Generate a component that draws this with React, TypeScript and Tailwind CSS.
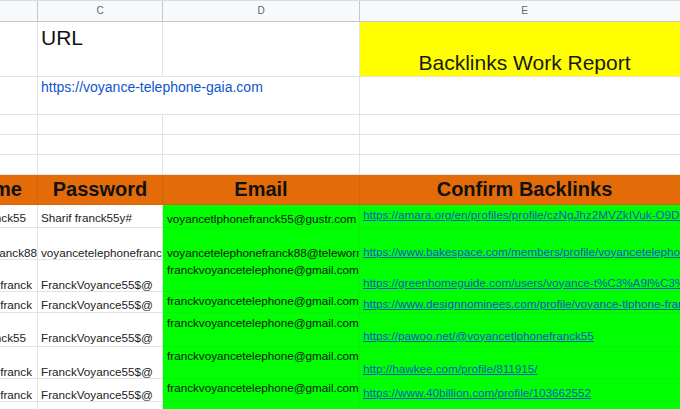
import React from "react";

type CellProps = { className?: string; children?: React.ReactNode };

// one spreadsheet cell: gridlines on the right and bottom
const Cell = ({ className = "", children }: CellProps) => (
  <div className={`flex overflow-hidden whitespace-nowrap border-r border-b ${className}`}>{children}</div>
);

const head = "bg-[#f8f9fa] border-[#c4c7c5] justify-center items-center text-[10px] text-[#5f6368]";
const plain = "border-[#e2e3e3]";
const orange = "bg-[#e36c09] border-[#d2640c] justify-center items-center text-[20px] font-bold text-[#111]";
const green = "bg-[#00ff00] border-[#12ea12]";
const link = "text-[#1155cc] underline";

const rows = [
  {
    user: "voyancetlphonefranck55",
    userCls: "items-end pb-[3px] pr-[11px]",
    pass: "Sharif franck55y#",
    passCls: "items-end pb-[3px]",
    email: "voyancetlphonefranck55@gustr.com",
    emailCls: "items-end pb-[2px]",
    url: "https://amara.org/en/profiles/profile/czNgJhz2MVZkIVuk-O9DXo-V0f1Ef-UowJl1d80gTvuFylcu/",
    urlCls: "items-start pt-[3px] whitespace-normal break-all leading-[14px]",
  },
  {
    user: "voyancetelephonefranck88",
    userCls: "items-end pb-0 pr-0",
    pass: "voyancetelephonefranck88",
    passCls: "items-end pb-0",
    email: "voyancetelephonefranck88@teleworm.us",
    emailCls: "items-end pb-0",
    url: "https://www.bakespace.com/members/profile/voyancetelephonefranck88/1599447/",
    urlCls: "items-end pb-[1px]",
  },
  {
    user: "Sharif franck",
    userCls: "items-end pb-0 pr-[5px]",
    pass: "FranckVoyance55$@",
    passCls: "items-end pb-0",
    email: "franckvoyancetelephone@gmail.com",
    emailCls: "items-start pt-[3px]",
    url: "https://greenhomeguide.com/users/voyance-t%C3%A9l%C3%A9phone-franck",
    urlCls: "items-end pb-[2px]",
  },
  {
    user: "Sharif franck",
    userCls: "items-end pb-[1px] pr-[5px]",
    pass: "FranckVoyance55$@",
    passCls: "items-end pb-[1px]",
    email: "franckvoyancetelephone@gmail.com",
    emailCls: "items-start pt-[2px]",
    url: "https://www.designnominees.com/profile/voyance-tlphone-franck",
    urlCls: "items-end pb-[2px]",
  },
  {
    user: "voyancetlphonefranck55",
    userCls: "items-end pb-[2px] pr-[11px]",
    pass: "FranckVoyance55$@",
    passCls: "items-end pb-[2px]",
    email: "franckvoyancetelephone@gmail.com",
    emailCls: "items-start pt-[3px]",
    url: "https://pawoo.net/@voyancetlphonefranck55",
    urlCls: "items-end pb-[4px]",
  },
  {
    user: "Sharif franck",
    userCls: "items-end pb-0 pr-[5px]",
    pass: "FranckVoyance55$@",
    passCls: "items-end pb-0",
    email: "franckvoyancetelephone@gmail.com",
    emailCls: "items-start pt-[2px]",
    url: "http://hawkee.com/profile/811915/",
    urlCls: "items-end pb-[3px]",
  },
  {
    user: "Sharif franck",
    userCls: "items-end pb-0 pr-[5px]",
    pass: "FranckVoyance55$@",
    passCls: "items-end pb-0",
    email: "franckvoyancetelephone@gmail.com",
    emailCls: "items-start pt-[2px]",
    url: "https://www.40billion.com/profile/103662552",
    urlCls: "items-end pb-[2px]",
  },
];

export default function App() {
  return (
    <div className="w-[680px] h-[409px] overflow-hidden bg-white font-['Liberation_Sans',Arial,sans-serif] leading-[1.15] text-[#222]">
      <div className="-ml-[90px] grid grid-cols-[128px_125px_197px_330px] grid-rows-[21px_55px_38px_20px_20px_20px_30px_23px_32px_32px_21px_34px_32px_23px_20px] border-t border-[#dadce0]">
        {/* column letters */}
        <Cell className={head} />
        <Cell className={head}>C</Cell>
        <Cell className={head}>D</Cell>
        <Cell className={head}>E</Cell>

        {/* title row */}
        <Cell className={plain} />
        <Cell className={`${plain} items-start pl-[3px] pt-[4px] text-[21px] text-[#111]`}>URL</Cell>
        <Cell className={plain} />
        <Cell className="bg-[#ffff00] border-[#e8e8c0] justify-center items-end pb-[1px] text-[21px] text-[#1a1a1a]">
          Backlinks Work Report
        </Cell>

        {/* site url, overflows into D */}
        <Cell className={plain} />
        <Cell className={`${plain} col-span-2 items-start pl-[3px] pt-[2px] text-[14px] text-[#1155cc]`}>
          https://voyance-telephone-gaia.com
        </Cell>
        <Cell className={plain} />

        {[0, 1, 2].map((i) => (
          <React.Fragment key={i}>
            <Cell className={plain} />
            <Cell className={plain} />
            <Cell className={plain} />
            <Cell className={plain} />
          </React.Fragment>
        ))}

        {/* table header */}
        <Cell className={orange}>Username</Cell>
        <Cell className={orange}>Password</Cell>
        <Cell className={orange}>Email</Cell>
        <Cell className={orange}>Confirm Backlinks</Cell>

        {rows.map((r, i) => (
          <React.Fragment key={i}>
            <Cell className={`${plain} justify-end text-[11.7px] ${r.userCls}`}>{r.user}</Cell>
            <Cell className={`${plain} pl-[3px] text-[11.7px] ${r.passCls}`}>{r.pass}</Cell>
            <Cell className={`${green} pl-[4px] text-[11.7px] text-[#111] ${r.emailCls}`}>{r.email}</Cell>
            <Cell className={`${green} pl-[3px] text-[11.7px] ${r.urlCls}`}>
              <span className={link}>{r.url}</span>
            </Cell>
          </React.Fragment>
        ))}

        <Cell className={plain} />
        <Cell className={plain} />
        <Cell className={green} />
        <Cell className={green} />
      </div>
    </div>
  );
}
